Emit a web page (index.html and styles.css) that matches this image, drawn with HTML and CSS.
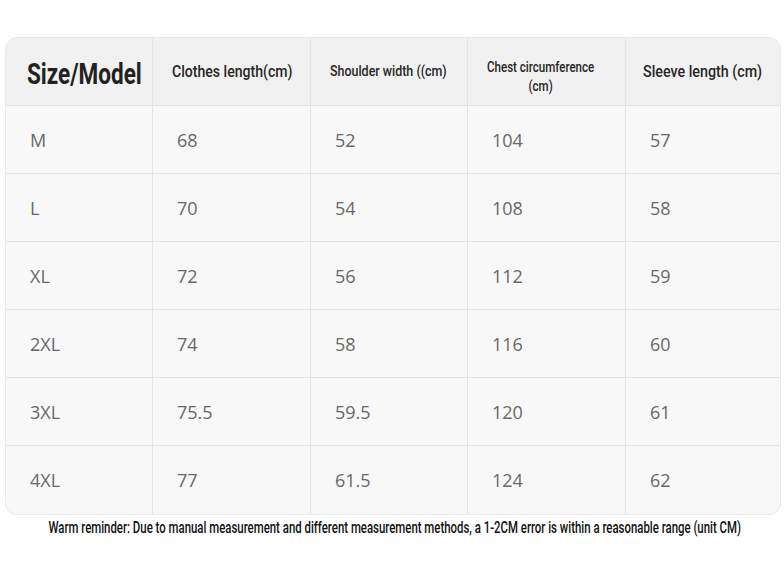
FILE: index.html
```html
<!DOCTYPE html>
<html>
<head>
<meta charset="utf-8">
<link rel="stylesheet" href="styles.css">
</head>
<body>
<div class="page">
  <div class="card">
    <div class="grid">
      <div class="cell head first"><span class="cond title">Size/Model</span></div>
      <div class="cell head"><span class="cond clothes">Clothes length(cm)</span></div>
      <div class="cell head"><span class="cond shoulder">Shoulder width ((cm)</span></div>
      <div class="cell head center"><span class="cond mid">Chest circumference<br>(cm)</span></div>
      <div class="cell head big"><span class="cond sleeve">Sleeve length (cm)</span></div>

      <div class="cell body">M</div><div class="cell body">68</div><div class="cell body">52</div><div class="cell body">104</div><div class="cell body">57</div>
      <div class="cell body">L</div><div class="cell body">70</div><div class="cell body">54</div><div class="cell body">108</div><div class="cell body">58</div>
      <div class="cell body">XL</div><div class="cell body">72</div><div class="cell body">56</div><div class="cell body">112</div><div class="cell body">59</div>
      <div class="cell body">2XL</div><div class="cell body">74</div><div class="cell body">58</div><div class="cell body">116</div><div class="cell body">60</div>
      <div class="cell body">3XL</div><div class="cell body">75.5</div><div class="cell body">59.5</div><div class="cell body">120</div><div class="cell body">61</div>
      <div class="cell body last">4XL</div><div class="cell body last">77</div><div class="cell body last">61.5</div><div class="cell body last">124</div><div class="cell body last">62</div>
    </div>
  </div>
  <div class="note"><span class="cond foot">Warm reminder: Due to manual measurement and different measurement methods, a 1-2CM error is within a reasonable range (unit CM)</span></div>
</div>
</body>
</html>
```
FILE: styles.css
```css
html, body {
  margin: 0;
  padding: 0;
  background: #ffffff;
}
.page {
  width: 784px;
  height: 588px;
  padding-top: 37px;
  box-sizing: border-box;
  overflow: hidden;
}
.card {
  margin-left: 5px;
  width: 776px;
  border: 1px solid #e9e9e9;
  border-radius: 12px;
  overflow: hidden;
  background: #f8f8f8;
  box-sizing: border-box;
}
.grid {
  display: grid;
  grid-template-columns: 147px 158px 157px 158px 154px;
  grid-auto-rows: 68px;
}
.cell {
  display: flex;
  align-items: center;
  border-right: 1px solid #e4e4e4;
  border-bottom: 1px solid #e4e4e4;
  box-sizing: border-box;
  white-space: nowrap;
}
.cell:nth-child(5n) {
  border-right: none;
}
.cell.last {
  border-bottom: none;
}
.cond {
  display: inline-block;
  font-family: Roboto, "Liberation Sans", sans-serif;
  transform-origin: left center;
}
.head {
  background: #f1f1f1;
  font-size: 16px;
  font-weight: 500;
  color: #262626;
  padding-left: 19px;
  line-height: 19px;
}
.head .title {
  font-size: 30px;
  font-weight: 700;
  color: #222;
  transform: scaleX(0.75);
}
.head .clothes {
  transform: scaleX(0.88);
}
.head .shoulder {
  font-size: 15px;
  transform: scaleX(0.83);
}
.head.first {
  padding-left: 21px;
  padding-top: 4px;
}
.head.center {
  justify-content: center;
  text-align: center;
  padding-left: 0;
  padding-right: 12px;
  padding-top: 10px;
}
.head .mid {
  font-size: 15px;
  transform: scaleX(0.77);
  transform-origin: center center;
}
.head.big {
  padding-left: 17px;
}
.head .sleeve {
  font-size: 17px;
  transform: scaleX(0.84);
}
.body {
  font-family: "Open Sans", "Noto Sans", sans-serif;
  font-size: 18px;
  color: #686868;
  padding-left: 24px;
}
.note {
  margin-top: 3px;
  padding-left: 5px;
  display: flex;
  justify-content: center;
  white-space: nowrap;
}
.foot {
  font-size: 16px;
  font-weight: 500;
  color: #111;
  transform: scaleX(0.713);
  transform-origin: center center;
}
```
